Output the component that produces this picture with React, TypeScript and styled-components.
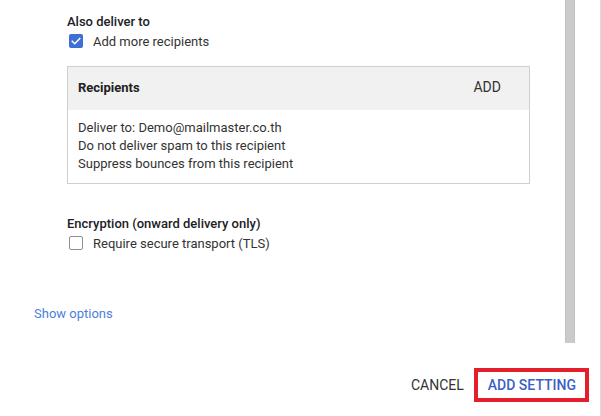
import styled, { createGlobalStyle } from "styled-components";

const GlobalStyle = createGlobalStyle`
  body {
    margin: 0;
    background: #ffffff;
    font-family: Roboto, "Liberation Sans", Arial, sans-serif;
  }
`;

function CheckMark() {
  return (
    <svg width="12" height="12" viewBox="0 0 24 24" fill="none">
      <path
        d="M4.5 12.5l5 5L19.5 7"
        stroke="#ffffff"
        strokeWidth="3"
        strokeLinecap="square"
      />
    </svg>
  );
}

function App() {
  return (
    <>
      <GlobalStyle />
      <Dialog>
        <Body>
          <Content>
            <Section>
              <Label>Also deliver to</Label>
              <CheckRow>
                <Box $checked>
                  <CheckMark />
                </Box>
                <span>Add more recipients</span>
              </CheckRow>

              <Recipients>
                <RecipientsHeader>
                  <HeaderTitle>Recipients</HeaderTitle>
                  <HeaderAction>ADD</HeaderAction>
                </RecipientsHeader>
                <RecipientsBody>
                  <Line>Deliver to: Demo@mailmaster.co.th</Line>
                  <Line>Do not deliver spam to this recipient</Line>
                  <Line>Suppress bounces from this recipient</Line>
                </RecipientsBody>
              </Recipients>

              <Label $spaced>Encryption (onward delivery only)</Label>
              <CheckRow>
                <Box />
                <span>Require secure transport (TLS)</span>
              </CheckRow>
            </Section>

            <ShowOptions>Show options</ShowOptions>
          </Content>
          <ScrollThumb />
        </Body>

        <Footer>
          <TextButton>CANCEL</TextButton>
          <Highlight>
            <TextButton $primary>ADD SETTING</TextButton>
          </Highlight>
        </Footer>
      </Dialog>
    </>
  );
}

const Dialog = styled.div`
  width: 601px;
  height: 416px;
  box-sizing: border-box;
  border-right: 1px solid #dadada;
  display: flex;
  flex-direction: column;
  background: #ffffff;
`;

const Body = styled.div`
  height: 343px;
  display: flex;
`;

const Content = styled.div`
  flex: 1;
  padding: 13px 0 0 34px;
`;

const Section = styled.div`
  padding-left: 33px;
`;

const Label = styled.div<{ $spaced?: boolean }>`
  font-size: 13px;
  line-height: 18px;
  font-weight: 500;
  color: #202124;
  margin-top: ${(props) => (props.$spaced ? "31px" : "0")};
`;

const CheckRow = styled.div`
  display: flex;
  align-items: center;
  gap: 10px;
  margin-top: 1px;
  height: 18px;
  padding-left: 2px;
  font-size: 13px;
  color: #333333;
`;

const Box = styled.div<{ $checked?: boolean }>`
  width: 14px;
  height: 14px;
  box-sizing: border-box;
  border-radius: 2px;
  display: flex;
  align-items: center;
  justify-content: center;
  margin-top: -1px;
  background: ${(props) => (props.$checked ? "#3f6fd5" : "#ffffff")};
  border: ${(props) =>
    props.$checked ? "none" : "1.5px solid #8f8f8f"};
`;

const Recipients = styled.div`
  margin-top: 16px;
  width: 463px;
  box-sizing: border-box;
  border: 1px solid #cfcfcf;
`;

const RecipientsHeader = styled.div`
  height: 43px;
  box-sizing: border-box;
  padding: 0 28px 3px 10px;
  background: #f1f1f1;
  display: flex;
  align-items: center;
  justify-content: space-between;
`;

const HeaderTitle = styled.div`
  font-size: 13px;
  font-weight: 700;
  color: #212121;
`;

const HeaderAction = styled.div`
  font-size: 14px;
  font-weight: 400;
  color: #333333;
`;

const RecipientsBody = styled.div`
  padding: 9px 10px 10px;
`;

const Line = styled.div`
  font-size: 13px;
  line-height: 18px;
  color: #333333;
`;

const ShowOptions = styled.div`
  margin-top: 53px;
  font-size: 13px;
  line-height: 18px;
  color: #4a7fdc;
`;

const ScrollThumb = styled.div`
  width: 8px;
  margin-right: 25px;
  background: #cbcbcb;
  border-left: 1px solid #c2c2c2;
  border-right: 1px solid #c2c2c2;
`;

const Footer = styled.div`
  flex: 1;
  display: flex;
  justify-content: flex-end;
  align-items: flex-start;
  gap: 10px;
  padding: 25px 11px 0 0;
`;

const Highlight = styled.div`
  height: 34px;
  box-sizing: border-box;
  border: 4px solid #e21f2a;
  padding: 0 9px 0 10px;
  display: flex;
  align-items: center;
`;

const TextButton = styled.div<{ $primary?: boolean }>`
  font-size: 14px;
  font-weight: ${(props) => (props.$primary ? 500 : 400)};
  line-height: 34px;
  color: ${(props) => (props.$primary ? "#3b5fc8" : "#333333")};
`;

export default App;
